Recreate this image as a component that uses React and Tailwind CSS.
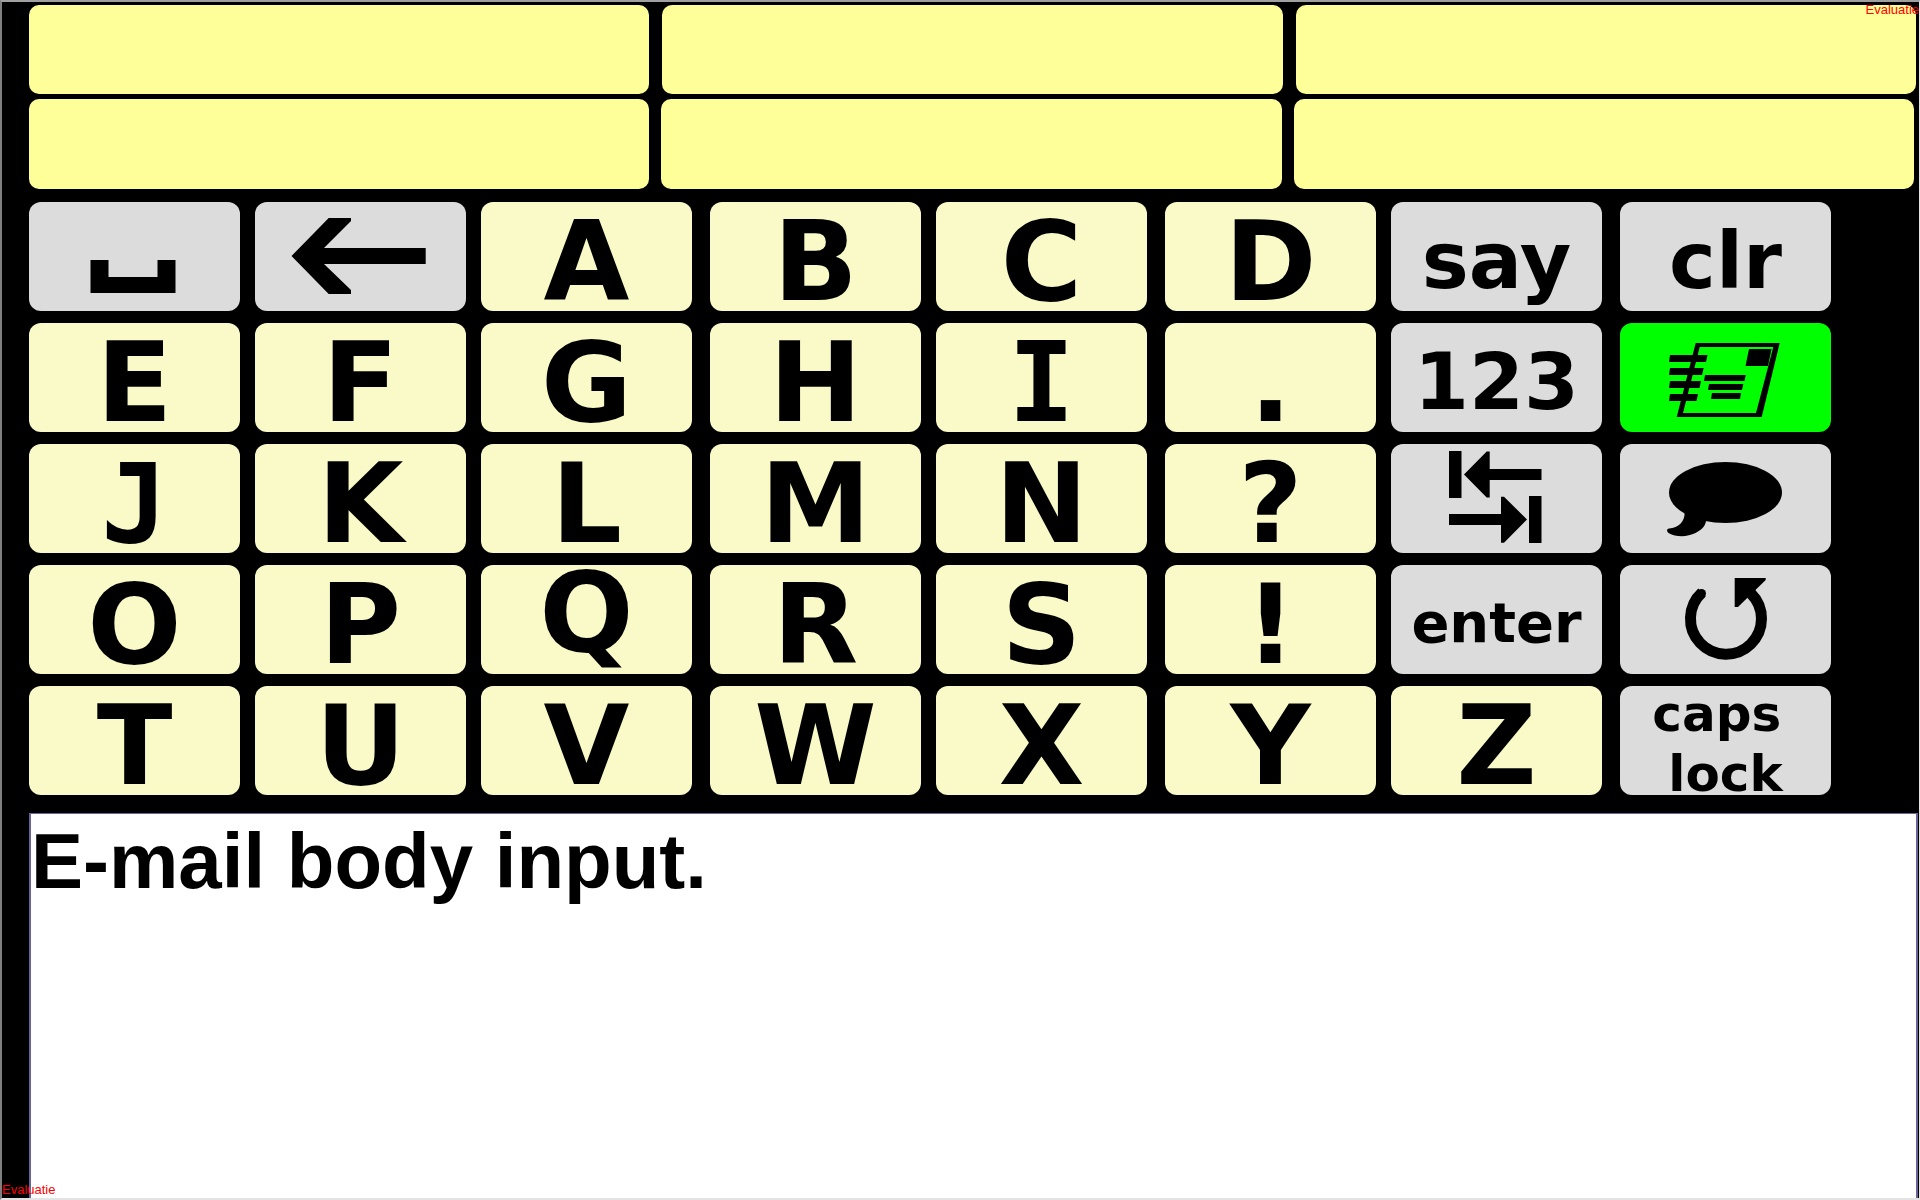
const LETTER = "bg-[#fafac8] pt-[10px] text-[111px] leading-[96px]";
const MONO_LETTER =
  "bg-[#fafac8] pt-[10px] text-[111px] leading-[96px] font-['DejaVu_Sans_Mono',monospace]";
const WORD = "bg-[#dcdcdc] pt-[8px] text-[79px] leading-[80px]";
const MEDIUM = "bg-[#dcdcdc] pt-[6px] text-[56px] leading-[60px]";
const SMALL = "bg-[#dcdcdc] pt-[6px] text-[50px] leading-[60px]";
const ICON = "bg-[#dcdcdc]";

function Icon({ children }) {
  return (
    <svg viewBox="0 0 211 109" className="h-full w-full" fill="currentColor" aria-hidden="true">
      {children}
    </svg>
  );
}

const SpaceIcon = () => (
  <Icon>
    <path d="M61.500 58H79.500V75H128.500V58H146.500V91H61.500Z" />
  </Icon>
);

const BackIcon = () => (
  <Icon>
    <path d="M36.500 54L73.700 16H96V19L69 46H170.700V62H69L96 88V92H73.700Z" />
  </Icon>
);

const TabIcon = () => (
  <Icon>
    <path d="M58 7H70.500V54H58Z" />
    <path d="M73 30.500L95.700 7.500H98.700V25H150.500V36H98.700V53.500H95.700Z" />
    <path d="M58 70H110V52.700H113L136 75.500L113 98.700H110V81H58Z" />
    <path d="M138 52H150.500V99H138Z" />
  </Icon>
);

const MailIcon = () => (
  <Icon>
    <path
      fillRule="evenodd"
      d="M75.700 20H159.700L141.700 94H56.700ZM79.700 24L63 90H136L153.300 24Z"
    />
    <path d="M50 32H87.500L86 39H49Z" />
    <path d="M50 45H83.700L82 52H49Z" />
    <path d="M50 58H81L79.500 65H49Z" />
    <path d="M50 71H78L76.500 78H49Z" />
    <path d="M85 52H125.700L124.500 58H84Z" />
    <path d="M89 61H123.300L122 67H88Z" />
    <path d="M92 70H121L120 76H91Z" />
    <path d="M129 26H151.500L148 43H125.500Z" />
  </Icon>
);

const SpeechIcon = () => (
  <Icon>
    <ellipse cx="105.500" cy="48.500" rx="56.500" ry="30.500" />
    <path d="M64.500 68C65.500 77 58.500 84 49 84.500C46.500 85 46.500 87 48.500 89C56.500 93.500 67.500 93 75.500 89C81.500 86 85.500 82 86 77L78.500 66Z" />
  </Icon>
);

const UndoIcon = () => (
  <Icon>
    <path
      d="M82 27.500A35.500 35.500 0 1 0 131 28.500"
      fill="none"
      stroke="currentColor"
      strokeWidth="11"
    />
    <circle cx="81.500" cy="28.500" r="4.500" />
    <path d="M114.700 13H145.700V15L118 42H114.700Z" />
  </Icon>
);

const letter = (text) => ({ text, look: LETTER });

const ROWS = [
  [
    { label: "Space", icon: SpaceIcon, look: ICON },
    { label: "Backspace", icon: BackIcon, look: ICON },
    letter("A"),
    letter("B"),
    letter("C"),
    letter("D"),
    { text: "say", look: WORD },
    { text: "clr", look: WORD },
  ],
  [
    letter("E"),
    letter("F"),
    letter("G"),
    letter("H"),
    { text: "I", look: MONO_LETTER },
    letter("."),
    { text: "123", look: WORD },
    { label: "E-mail", icon: MailIcon, look: "bg-[#00ff00]" },
  ],
  [
    { text: "J", look: MONO_LETTER },
    letter("K"),
    letter("L"),
    letter("M"),
    letter("N"),
    letter("?"),
    { label: "Tab", icon: TabIcon, look: ICON },
    { label: "Speech", icon: SpeechIcon, look: ICON },
  ],
  [
    letter("O"),
    letter("P"),
    { text: "Q", look: "bg-[#fafac8] pb-[12px] text-[111px] leading-[96px]" },
    letter("R"),
    letter("S"),
    letter("!"),
    { text: "enter", look: MEDIUM },
    { label: "Undo", icon: UndoIcon, look: ICON },
  ],
  [
    letter("T"),
    letter("U"),
    letter("V"),
    letter("W"),
    letter("X"),
    letter("Y"),
    letter("Z"),
    { text: "caps \nlock", look: SMALL },
  ],
];

// Space to the right of each key column.
const GAPS = [
  "mr-[15px]",
  "mr-[15px]",
  "mr-[18px]",
  "mr-[15px]",
  "mr-[18px]",
  "mr-[15px]",
  "mr-[18px]",
  "",
];

function Key({ item, gap }) {
  const Drawing = item.icon;
  return (
    <button
      type="button"
      aria-label={item.label}
      className={`flex h-[109px] min-w-0 flex-1 items-center justify-center rounded-xl text-center font-bold whitespace-pre ${item.look} ${gap}`}
    >
      {Drawing ? <Drawing /> : item.text}
    </button>
  );
}

function Prediction({ n }) {
  return (
    <button
      type="button"
      aria-label={`Prediction ${n}`}
      className="h-full flex-1 rounded-[10px] bg-[#ffff99]"
    />
  );
}

export default function App() {
  return (
    <main className="relative flex min-h-screen flex-col overflow-hidden border-t-2 border-r border-b-2 border-l-2 border-t-[#a0a0a0] border-r-[#e3e3e3] border-b-[#e3e3e3] border-l-[#808080] bg-black pl-[27px] font-['DejaVu_Sans',Verdana,sans-serif] text-black">
      <div className="mt-[3px] flex h-[89px] gap-[13px] pr-[3px]">
        <Prediction n={1} />
        <Prediction n={2} />
        <Prediction n={3} />
      </div>
      <div className="mt-[5px] flex h-[90px] gap-[12px] pr-[5px]">
        <Prediction n={4} />
        <Prediction n={5} />
        <Prediction n={6} />
      </div>

      <div className="mt-[13px] flex flex-col gap-3 pr-[88px]">
        {ROWS.map((row, r) => (
          <div key={r} className="flex">
            {row.map((item, c) => (
              <Key key={c} item={item} gap={GAPS[c]} />
            ))}
          </div>
        ))}
      </div>

      <textarea
        aria-label="E-mail body"
        defaultValue="E-mail body input."
        className="mt-[18px] mr-px block w-auto flex-1 resize-none border-x-2 border-t border-[#6a6399] bg-white pt-[2px] font-['Liberation_Sans',Arial,sans-serif] text-[78px] leading-[90px] font-bold outline-none"
      />

      <span className="absolute top-0 right-0 font-['Liberation_Sans',Arial,sans-serif] text-[13px] leading-4 text-[#ff0000]">
        Evaluatie
      </span>
      <span className="absolute bottom-0 left-0 font-['Liberation_Sans',Arial,sans-serif] text-[13px] leading-4 text-[#ff0000]">
        Evaluatie
      </span>
    </main>
  );
}
